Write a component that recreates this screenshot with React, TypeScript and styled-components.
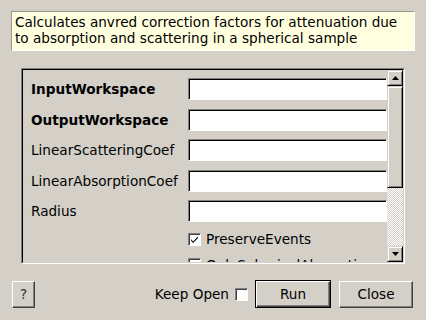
import React from "react";
import styled, { createGlobalStyle } from "styled-components";

const Global = createGlobalStyle`
  html, body { margin: 0; padding: 0; background: #d4d0c8; }
  body { font-family: "DejaVu Sans", sans-serif; font-size: 13.6px; color: #000; }
`;

const Window = styled.div`
  width: 426px;
  height: 320px;
  box-sizing: border-box;
  padding: 11px 11px 0 11px;
  display: flex;
  flex-direction: column;
  overflow: hidden;
`;

const Description = styled.div`
  box-sizing: border-box;
  width: 404px;
  height: 40px;
  background: #ffffdf;
  border: 1px solid;
  border-color: #9a9890 #ffffff #ffffff #9a9890;
  padding: 2px 0 2px 3px;
  line-height: 16px;
  white-space: nowrap;
  overflow: hidden;
`;

const Panel = styled.div`
  margin: 17px 0 0 10px;
  width: 384px;
  height: 196px;
  box-sizing: border-box;
  border: 1px solid;
  border-color: #808080 #ffffff #ffffff #808080;
  display: flex;
`;

const PanelInner = styled.div`
  flex: 1;
  display: flex;
  border: 1px solid;
  border-color: #000000 #d4d0c8 #d4d0c8 #000000;
  overflow: hidden;
`;

const Content = styled.div`
  flex: 1;
  padding: 8px 0 0 8px;
  display: grid;
  grid-template-columns: 157px 1fr;
  grid-auto-rows: auto;
  align-content: start;
  row-gap: 8.5px;
  align-items: center;
  overflow: hidden;
`;

const Label = styled.div<{ $bold?: boolean }>`
  font-weight: ${(p) => (p.$bold ? "bold" : "normal")};
  white-space: nowrap;
`;

const Input = styled.div`
  height: 22px;
  box-sizing: border-box;
  background: #fff;
  border: 1px solid;
  border-color: #808080 #ffffff #ffffff #808080;
  box-shadow: inset 1px 1px 0 #000000;
`;

const CheckRow = styled.div`
  grid-column: 2;
  height: 17px;
  display: flex;
  align-items: center;
  gap: 5px;
  white-space: nowrap;
`;

const Box = styled.div`
  width: 13px;
  height: 13px;
  box-sizing: border-box;
  background: #fff;
  border: 1px solid;
  border-color: #808080 #ffffff #ffffff #808080;
  box-shadow: inset 1px 1px 0 #404040;
  display: flex;
  align-items: center;
  justify-content: center;
  flex: none;
`;

const Scrollbar = styled.div`
  width: 16px;
  display: flex;
  flex-direction: column;
`;

const ScrollButton = styled.div`
  height: 16px;
  box-sizing: border-box;
  background: #d4d0c8;
  border: 1px solid;
  border-color: #d4d0c8 #000 #000 #d4d0c8;
  box-shadow: inset 1px 1px 0 #fff, inset -1px -1px 0 #808080;
  display: flex;
  align-items: center;
  justify-content: center;
`;

const Thumb = styled(ScrollButton)`
  height: 102px;
`;

const Track = styled.div`
  flex: 1;
  background-color: #d4d0c8;
  background-image: repeating-conic-gradient(#ffffff 0 25%, #d4d0c8 0 50%);
  background-size: 2px 2px;
`;

const Footer = styled.div`
  margin-top: 16px;
  padding: 0 2px 0 1px;
  display: flex;
  align-items: center;
`;

const Button = styled.button<{ $w: number; $default?: boolean }>`
  width: ${(p) => p.$w}px;
  height: ${(p) => (p.$default ? 28 : 27)}px;
  box-sizing: border-box;
  font-family: "DejaVu Sans", sans-serif;
  font-size: 13.6px;
  color: #000;
  background: #d4d0c8;
  padding: 0;
  border: 1px solid;
  border-color: ${(p) => (p.$default ? "#000" : "#fff #404040 #404040 #fff")};
  box-shadow: ${(p) =>
    p.$default
      ? "inset 1px 1px 0 #fff, inset -1px -1px 0 #404040, inset -2px -2px 0 #808080"
      : "inset -1px -1px 0 #808080"};
`;

const HelpButton = styled(Button)`
  color: #333;
`;

const Spacer = styled.div`
  flex: 1;
`;

const KeepLabel = styled.span`
  margin-right: 6px;
`;

const Check = () => (
  <svg width="9" height="9" viewBox="0 0 9 9">
    <path d="M1 4 L3 6.5 L8 1.5 L8 3 L3 8 L1 5.5 Z" fill="#000" />
  </svg>
);

const Arrow = ({ up }: { up?: boolean }) => (
  <svg width="7" height="4" viewBox="0 0 7 4">
    <path d={up ? "M3.5 0 L7 4 L0 4 Z" : "M0 0 L7 0 L3.5 4 Z"} fill="#000" />
  </svg>
);

export default function App() {
  return (
    <>
      <Global />
      <Window>
        <Description>
          Calculates anvred correction factors for attenuation due
          <br />
          to absorption and scattering in a spherical sample
        </Description>
        <Panel>
          <PanelInner>
            <Content>
              <Label $bold>InputWorkspace</Label>
              <Input />
              <Label $bold>OutputWorkspace</Label>
              <Input />
              <Label>LinearScatteringCoef</Label>
              <Input />
              <Label>LinearAbsorptionCoef</Label>
              <Input />
              <Label>Radius</Label>
              <Input />
              <CheckRow>
                <Box>
                  <Check />
                </Box>
                PreserveEvents
              </CheckRow>
              <CheckRow>
                <Box />
                OnlySphericalAbsorption
              </CheckRow>
            </Content>
            <Scrollbar>
              <ScrollButton>
                <Arrow up />
              </ScrollButton>
              <Thumb />
              <Track />
              <ScrollButton>
                <Arrow />
              </ScrollButton>
            </Scrollbar>
          </PanelInner>
        </Panel>
        <Footer>
          <HelpButton $w={23}>?</HelpButton>
          <Spacer />
          <KeepLabel>Keep Open</KeepLabel>
          <Box />
          <Button $w={76} $default style={{ marginLeft: 7 }}>
            Run
          </Button>
          <Button $w={74} style={{ marginLeft: 8 }}>
            Close
          </Button>
        </Footer>
      </Window>
    </>
  );
}
